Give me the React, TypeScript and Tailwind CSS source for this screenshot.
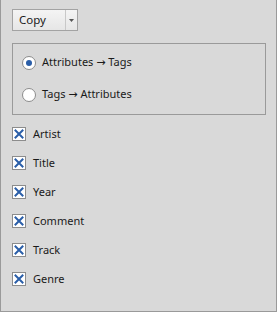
import React from "react";

const items = ["Artist", "Title", "Year", "Comment", "Track", "Genre"];

function Check() {
  return (
    <div className="w-[14px] h-[14px] border border-[#8c8c8c] bg-white flex items-center justify-center">
      <svg width="10" height="10" viewBox="0 0 10 10">
        <path d="M1.5 1.5 L8.5 8.5 M8.5 1.5 L1.5 8.5" stroke="#2a5ea8" strokeWidth="2" strokeLinecap="square" />
      </svg>
    </div>
  );
}

function Radio({ on }: { on: boolean }) {
  return (
    <div className="w-[14px] h-[14px] rounded-full border border-[#8c8c8c] bg-white flex items-center justify-center">
      {on && <div className="w-[6px] h-[6px] rounded-full bg-[#2a5ea8]" />}
    </div>
  );
}

function Arrow() {
  return <span style={{ fontFamily: '"DejaVu Sans", sans-serif' }}>→</span>;
}

export default function App() {
  return (
    <div
      className="w-[277px] h-[312px] bg-[#d9d9d9] border-x border-b border-[#9a9a9a] text-[11px] text-[#1a1a1a] flex flex-col"
      style={{ fontFamily: '"Noto Sans", sans-serif' }}
    >
      <div className="pl-[11px] pt-[9px]">
        <div className="w-[66px] h-[22px] border border-[#a3a3a3] bg-gradient-to-b from-[#f4f4f4] to-[#e6e6e6] flex text-[11.5px]">
          <div className="flex-1 pl-[6px] flex items-center">Copy</div>
          <div className="w-[12px] border-l border-[#c8c8c8] flex items-center justify-center">
            <svg width="5" height="3" viewBox="0 0 5 3"><path d="M0 0 H5 L2.5 3 Z" fill="#555" /></svg>
          </div>
        </div>
      </div>
      <div className="ml-[11px] mt-[12px] w-[254px] h-[72px] border border-[#9a9a9a] flex flex-col pl-[9px] pt-[12px] gap-[18px]">
        <div className="flex items-center gap-[6px] h-[14px]">
          <Radio on={true} />
          <span>Attributes <Arrow /> Tags</span>
        </div>
        <div className="flex items-center gap-[6px] h-[14px]">
          <Radio on={false} />
          <span>Tags <Arrow /> Attributes</span>
        </div>
      </div>
      <div className="flex flex-col pl-[11px] pt-[12px] gap-[15px]">
        {items.map((t) => (
          <div key={t} className="flex items-center gap-[7px] h-[14px]">
            <Check />
            <span>{t}</span>
          </div>
        ))}
      </div>
    </div>
  );
}
